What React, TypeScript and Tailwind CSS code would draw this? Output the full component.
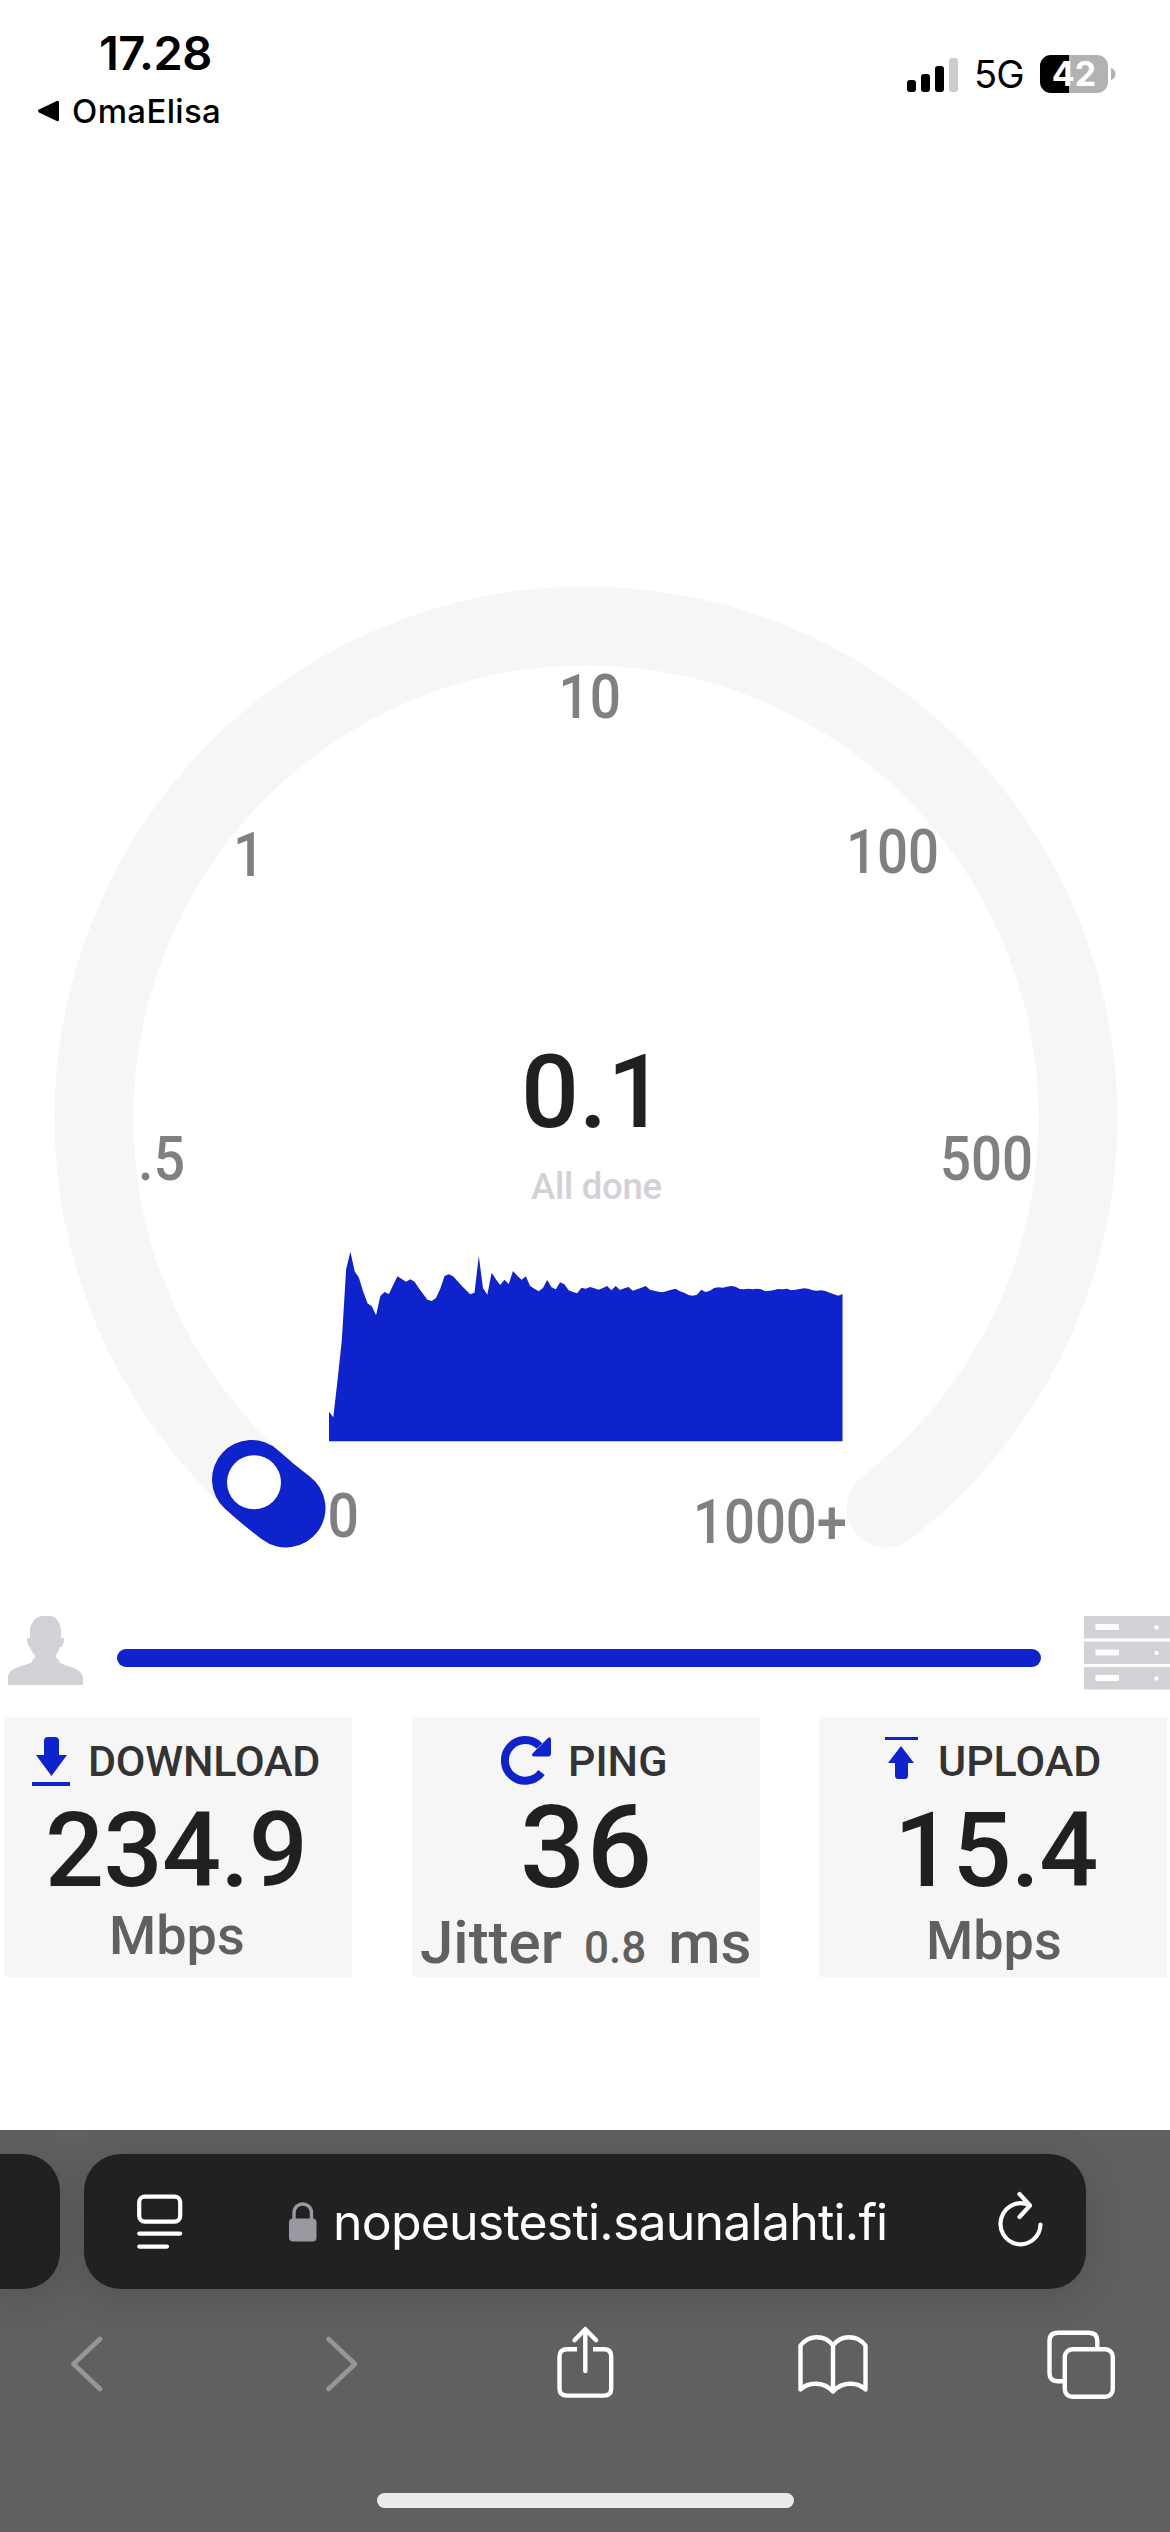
import { ReactNode } from 'react';

// y of each sample, 664 is the baseline of the chart
const samples = [
  575, 592, 480, 360, 148, 95, 154, 173, 215, 250, 259, 286, 228, 216, 222, 195, 169, 177, 185, 178,
  185, 205, 222, 239, 243, 234, 206, 168, 163, 169, 183, 197, 210, 223, 218, 108, 205, 224, 158, 178,
  195, 179, 192, 153, 167, 179, 169, 198, 206, 214, 204, 180, 202, 208, 187, 193, 211, 216, 220, 203,
  206, 201, 205, 209, 204, 198, 211, 198, 210, 205, 201, 212, 208, 203, 198, 209, 212, 215, 217, 213,
  209, 206, 214, 218, 225, 227, 224, 209, 216, 212, 204, 202, 203, 200, 198, 200, 207, 208, 206, 208,
  206, 208, 214, 212, 210, 207, 208, 206, 211, 209, 207, 205, 206, 211, 212, 211, 213, 218, 223, 227,
  222,
];

const ticks = [
  { label: '0', x: 327.5, y: 1537, width: 31.5 },
  { label: '.5', x: 138, y: 1180, width: 47 },
  { label: '1', x: 233, y: 876, width: 31.5 },
  { label: '10', x: 558.5, y: 718, width: 62.5 },
  { label: '100', x: 846, y: 873, width: 93 },
  { label: '500', x: 940, y: 1180, width: 93 },
  { label: '1000+', x: 693, y: 1542.5, width: 154 },
];

function StatusBar() {
  return (
    <header className="flex h-[160px] justify-between font-['Inter',sans-serif] text-black">
      <div className="pl-[37px] pt-[26px]">
        <div className="pl-[62px] text-[47px] font-semibold leading-[54px] tracking-[-0.5px]">17.28</div>
        <div className="mt-[9px] flex items-center gap-[12px]">
          <svg width="23" height="22" viewBox="0 0 23 22">
            <path d="M2.5 9.2 19.8 1Q22 0.2 22 2.5V19.5Q22 22 19.8 21L2.5 12.8Q-0.5 11 2.5 9.2Z" />
          </svg>
          <span className="text-[33px] font-medium leading-[44px] tracking-[0.35px]">OmaElisa</span>
        </div>
      </div>
      <div className="flex h-[38px] items-center pr-[54px] mt-[55px]">
        <svg width="52" height="36" viewBox="0 0 52 36">
          <rect x="0" y="24" width="9" height="12" rx="3" />
          <rect x="14" y="18" width="9" height="18" rx="3" />
          <rect x="28" y="10" width="9" height="26" rx="3" />
          <rect x="42" y="2" width="9" height="34" rx="3" fill="#cccccc" />
        </svg>
        <span className="ml-[15px] w-[50px] text-[38px] leading-[38px] tracking-[-0.8px]">5G</span>
        <div className="ml-[16px] flex h-[38px] w-[68px] items-center justify-center rounded-[11px] bg-linear-to-r from-black from-[42.5%] to-[#b2b2b2] to-[42.5%] text-[34px] font-bold leading-none text-white">
          42
        </div>
        <svg className="ml-[3px]" width="5" height="12" viewBox="0 0 5 12">
          <path d="M0 0C6 2 6 10 0 12Z" fill="#b2b2b2" />
        </svg>
      </div>
    </header>
  );
}

function Gauge() {
  const step = 513.5 / (samples.length - 1);
  const line = samples.map((y, i) => `L${(329 + i * step).toFixed(2)} ${(1220 + y / 3).toFixed(2)}`).join('');

  return (
    <svg className="block" width="1170" height="1440" viewBox="0 160 1170 1440" fontFamily="Roboto, sans-serif" fontWeight="500">
      <path d="M286 1508A492 492 0 1 1 886 1508" fill="none" stroke="#f6f6f6" strokeWidth="79" strokeLinecap="round" />
      <path d="M286 1508A492 492 0 0 1 251.5 1479.5" fill="none" stroke="#0f23cc" strokeWidth="79" strokeLinecap="round" />
      <circle cx="254" cy="1482.3" r="27" fill="#fff" />
      {ticks.map((t) => (
        <text key={t.label} x={t.x} y={t.y} textLength={t.width} lengthAdjust="spacingAndGlyphs" fontSize="61" fill="#808080">
          {t.label}
        </text>
      ))}
      <text x="521" y="1126.7" fontSize="102" fill="#221f20">0.1</text>
      <text x="531" y="1199" fontSize="36.5" textLength="131" fill="#d1d1d6">All done</text>
      <path d={`M329 1441.3${line}V1441.3Z`} fill="#0f23cc" />
    </svg>
  );
}

function Progress() {
  return (
    <div className="flex h-[117px] items-start pl-[8px] pt-[16px]">
      <svg width="75" height="69" viewBox="0 0 75 69" fill="#d1d1d6">
        <path d="M0 69V62C0 57 3 54 8 52C15 49 22 48 24 46Q24 44 25 43L27 42V39Q24 37 22 31Q20 31 20 28Q19 25 19 22H22V14C22 9 27 0 34 0H42C48 0 53 8 53 14V22H56Q56 26 55 28Q55 31 52 31Q51 35 48 39V42L50 43Q51 44 51 46C55 49 61 50 66 52C72 55 75 58 75 63V69Z" />
      </svg>
      <div className="ml-[34px] mt-[32.5px] h-[18.5px] w-[924px] rounded-full bg-[#0f23cc]" />
      <svg className="ml-[43px]" width="86" height="74" viewBox="0 0 86 74">
        {[0, 25.5, 51].map((y) => (
          <g key={y}>
            <rect y={y} width="86" height="22.5" fill="#d1d1d6" />
            <rect x="11.5" y={y + 8} width="23.5" height="6" fill="#fff" />
            <circle cx="72.5" cy={y + 11.5} r="2.2" fill="#fff" />
          </g>
        ))}
      </svg>
    </div>
  );
}

function Card({ children }: { children: ReactNode }) {
  return <div className="h-[260px] w-[348px] whitespace-nowrap bg-[#f6f6f6] pt-[15px] text-[#221f20]">{children}</div>;
}

function Results() {
  return (
    <section className="flex h-[413px] items-start pl-[4px] font-['Roboto',sans-serif] font-medium">
      <Card>
        <div className="flex h-[58px] items-center pl-[28px] text-[43px] text-[#333]">
          <svg width="38" height="49" viewBox="0 0 38 49" fill="#0f23cc">
            <path d="M12 4Q12 0 16 0H23Q27 0 27 4V18H35L19.5 39L4 18H12Z" />
            <path d="M0 45H38V49H0Z" />
          </svg>
          <span className="ml-[18px] tracking-[-0.2px]">DOWNLOAD</span>
        </div>
        <div className="h-[121px] pl-[41px] text-[104px] leading-[121px] tracking-[-0.6px]">234.9</div>
        <div className="pl-[105px] text-[54px] leading-[50px] text-[#606060]">Mbps</div>
      </Card>
      <div className="ml-[60px]">
        <Card>
          <div className="flex h-[58px] items-center pl-[89px] text-[43px] text-[#333]">
            <svg width="50" height="50" viewBox="0 0 50 50">
              <path d="M40.5 36.5A20.3 20.3 0 1 1 38.5 10" fill="none" stroke="#0f23cc" strokeWidth="8" />
              <path d="M47 2Q50 0 50 4V17Q50 20.5 47 20.5H33Q29.5 20 32 17Z" fill="#0f23cc" />
            </svg>
            <span className="ml-[17px]">PING</span>
          </div>
          <div className="h-[113px] pl-[108px] text-[115px] leading-[115px] tracking-[1.5px]">36</div>
          <div className="flex h-[80px] items-baseline pl-[8px] text-[60px] leading-[80px] text-[#606060]">
            <span>Jitter</span>
            <span className="ml-[22px] text-[44px]">0.8</span>
            <span className="ml-[22px]">ms</span>
          </div>
        </Card>
      </div>
      <div className="ml-[59px]">
        <Card>
          <div className="flex h-[58px] items-center pl-[66px] text-[43px] text-[#333]">
            <svg width="33" height="49" viewBox="0 0 33 49" fill="#0f23cc">
              <path d="M0 0H33V3H0Z" />
              <path d="M16 9L29 26H23V38Q23 42 20 42H13Q10 42 10 38V26H3Z" />
            </svg>
            <span className="ml-[20px]">UPLOAD</span>
          </div>
          <div className="h-[121px] pl-[75px] text-[104px] leading-[121px] tracking-[-0.6px]">15.4</div>
          <div className="pl-[107px] text-[54px] leading-[60px] text-[#606060]">Mbps</div>
        </Card>
      </div>
    </section>
  );
}

function BrowserBar() {
  return (
    <footer className="h-[402px] overflow-hidden bg-[#606060] pt-[24px]">
      <div className="flex gap-[24px]">
        <div className="h-[135px] w-[60px] rounded-r-[37px] bg-[#212121] shadow-[0_8px_40px_rgba(0,0,0,0.15)]" />
        <div className="flex h-[135px] w-[1002px] items-center rounded-[37px] bg-[#212121] pl-[53px] shadow-[0_8px_40px_rgba(0,0,0,0.15)]">
          <svg width="46" height="55" viewBox="0 0 46 55" fill="none" stroke="#fff" strokeWidth="4.2" strokeLinecap="round">
            <rect x="2.2" y="2.6" width="41" height="25" rx="5.5" />
            <path d="M2.2 39.6H43.2M2.2 52.6H30" />
          </svg>
          <svg className="ml-[106px]" width="28" height="40" viewBox="0 0 28 40">
            <path d="M5 19V11C5 -1 22.5 -1 22.5 11V19" fill="none" stroke="#9a99a1" strokeWidth="3.4" />
            <rect x="0" y="16.5" width="27.5" height="23" rx="4" fill="#9a99a1" />
          </svg>
          <span className="ml-[16px] w-[560px] whitespace-nowrap font-['Inter',sans-serif] text-[50px] leading-[60px] tracking-[-0.8px] text-white">
            nopeustesti.saunalahti.fi
          </span>
          <svg className="ml-[105px] mb-[5px]" width="46" height="56" viewBox="0 0 46 56" fill="none" stroke="#fff" strokeWidth="4.2" strokeLinecap="round" strokeLinejoin="round">
            <path d="M42.5 33.5A20 20.5 0 1 1 31.5 14.5M21.5 3L32 14.5L21.5 26" />
          </svg>
        </div>
      </div>
      <nav className="mt-[36px] flex h-[76px] items-start pl-[70px]">
        <svg className="mt-[11px]" width="33" height="56" viewBox="0 0 33 56" fill="none" stroke="#969696" strokeWidth="4.6" strokeLinecap="round" strokeLinejoin="round">
          <path d="M30 3L3.5 28L30 53" />
        </svg>
        <svg className="ml-[222px] mt-[11px]" width="33" height="56" viewBox="0 0 33 56" fill="none" stroke="#969696" strokeWidth="4.6" strokeLinecap="round" strokeLinejoin="round">
          <path d="M3.5 3L30 28L3.5 53" />
        </svg>
        <svg className="ml-[199px]" width="57" height="74" viewBox="0 0 57 74" fill="none" stroke="#fff" strokeWidth="4.4">
          <path d="M20 24.3H10Q2.5 24.3 2.5 31.5V63.5Q2.5 70.6 10 70.6H47Q54.2 70.6 54.2 63.5V31.5Q54.2 24.3 47 24.3H36" />
          <path d="M28.3 46V4.5M17.5 15.2L28.3 4.2L39.1 15.2" strokeLinecap="round" strokeLinejoin="round" />
        </svg>
        <svg className="ml-[182px] mt-[8px]" width="74" height="62" viewBox="0 0 74 62" fill="none" stroke="#fff" strokeWidth="4.4" strokeLinecap="round" strokeLinejoin="round">
          <path d="M37 58.5C28 48.5 13 48.5 4.5 56.5V12.5C13 1.5 29 1.5 37 12.5V58.5ZM37 12.5C45 1.5 61 1.5 69.5 12.5V56.5C61 48.5 46 48.5 37 58.5" />
        </svg>
        <svg className="ml-[177px] mt-[5px]" width="69" height="69" viewBox="0 0 69 69" fill="none" stroke="#fff" strokeWidth="4.4">
          <path d="M16 51.3H11Q2.5 51.3 2.5 43V11Q2.5 2.8 11 2.8H42Q50.3 2.8 50.3 11V17" />
          <rect x="17.8" y="19.3" width="48" height="47.5" rx="7.5" />
        </svg>
      </nav>
      <div className="mx-auto mt-[92px] h-[15px] w-[417px] rounded-full bg-[#ebebeb]" />
    </footer>
  );
}

export default function App() {
  return (
    <div className="h-[2532px] w-[1170px] overflow-hidden bg-white">
      <StatusBar />
      <Gauge />
      <Progress />
      <Results />
      <BrowserBar />
    </div>
  );
}
